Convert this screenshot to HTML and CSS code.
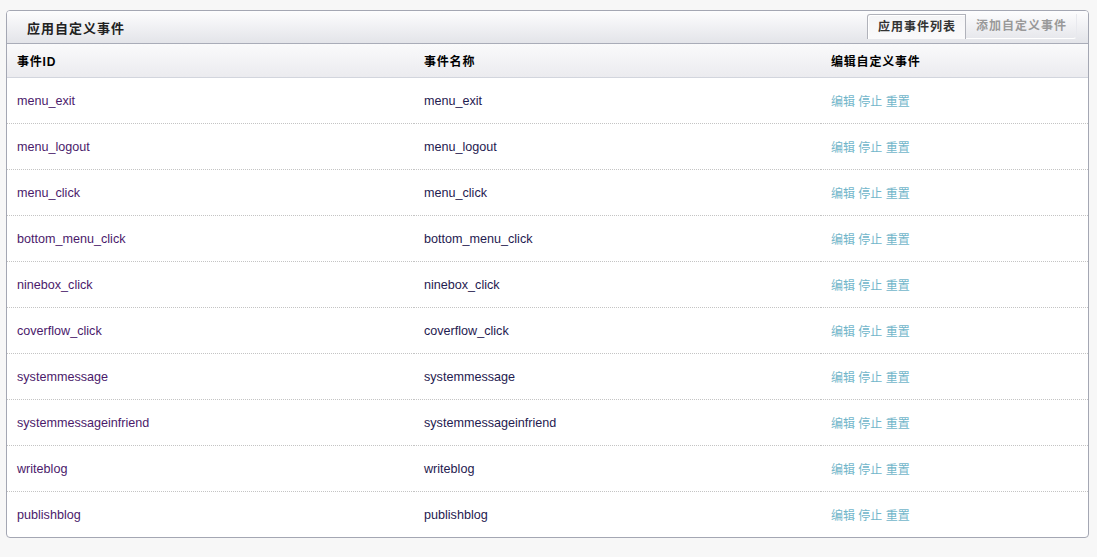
FILE: index.html
```html
<!DOCTYPE html>
<html lang="zh-CN">
<head>
    <meta charset="UTF-8">
    <title>应用自定义事件</title>
    <link rel="stylesheet" href="styles.css">
</head>
<body>

    <div class="panel">
        <div class="panel-head">
            <h2>应用自定义事件</h2>
            <div class="tabs">
                <a class="tab active" href="#">应用事件列表</a>
                <a class="tab" href="#">添加自定义事件</a>
            </div>
        </div>

        <table class="events">
            <thead>
                <tr>
                    <th class="col-id">事件ID</th>
                    <th class="col-name">事件名称</th>
                    <th>编辑自定义事件</th>
                </tr>
            </thead>
            <tbody>
                <tr><td class="ev-id">menu_exit</td><td class="ev-name">menu_exit</td><td class="ops"><a href="#">编辑</a> <a href="#">停止</a> <a href="#">重置</a></td></tr>
                <tr><td class="ev-id">menu_logout</td><td class="ev-name">menu_logout</td><td class="ops"><a href="#">编辑</a> <a href="#">停止</a> <a href="#">重置</a></td></tr>
                <tr><td class="ev-id">menu_click</td><td class="ev-name">menu_click</td><td class="ops"><a href="#">编辑</a> <a href="#">停止</a> <a href="#">重置</a></td></tr>
                <tr><td class="ev-id">bottom_menu_click</td><td class="ev-name">bottom_menu_click</td><td class="ops"><a href="#">编辑</a> <a href="#">停止</a> <a href="#">重置</a></td></tr>
                <tr><td class="ev-id">ninebox_click</td><td class="ev-name">ninebox_click</td><td class="ops"><a href="#">编辑</a> <a href="#">停止</a> <a href="#">重置</a></td></tr>
                <tr><td class="ev-id">coverflow_click</td><td class="ev-name">coverflow_click</td><td class="ops"><a href="#">编辑</a> <a href="#">停止</a> <a href="#">重置</a></td></tr>
                <tr><td class="ev-id">systemmessage</td><td class="ev-name">systemmessage</td><td class="ops"><a href="#">编辑</a> <a href="#">停止</a> <a href="#">重置</a></td></tr>
                <tr><td class="ev-id">systemmessageinfriend</td><td class="ev-name">systemmessageinfriend</td><td class="ops"><a href="#">编辑</a> <a href="#">停止</a> <a href="#">重置</a></td></tr>
                <tr><td class="ev-id">writeblog</td><td class="ev-name">writeblog</td><td class="ops"><a href="#">编辑</a> <a href="#">停止</a> <a href="#">重置</a></td></tr>
                <tr><td class="ev-id">publishblog</td><td class="ev-name">publishblog</td><td class="ops"><a href="#">编辑</a> <a href="#">停止</a> <a href="#">重置</a></td></tr>
            </tbody>
        </table>
    </div>

</body>
</html>
```

FILE: styles.css
```css
body {
    font-family: "Liberation Sans", Arial, "Noto Sans CJK SC", sans-serif;
    font-size: 12px;
    background-color: #f7f7f7;
    margin: 0;
    padding: 10px 0 0 6px;
}

.panel {
    width: 1081px;
    background: #fff;
    border: 1px solid #a4a7b3;
    border-radius: 4px;
    overflow: hidden;
}

.panel-head {
    height: 32px;
    display: flex;
    align-items: center;
    justify-content: space-between;
    padding: 0 11px 0 20px;
    background: linear-gradient(#fdfdfe, #e3e4e9);
    border-bottom: 1px solid #a9acb8;
}

.panel-head h2 {
    margin: 0;
    font-size: 13px;
    letter-spacing: 1px;
    font-weight: bold;
    color: #222;
}

.tabs {
    display: flex;
    align-self: flex-end;
    margin-bottom: 4px;
}

.tab {
    display: block;
    height: 24px;
    line-height: 24px;
    padding: 0 9px 0 10px;
    font-size: 12px;
    letter-spacing: 1px;
    font-weight: bold;
    color: #999;
    text-decoration: none;
    border-right: 1px solid #e8e9ee;
    border-bottom: 1px solid #fff;
    border-bottom-right-radius: 4px;
}

.tab.active {
    color: #333;
    background: linear-gradient(#f4f4f6, #fafafb);
    border: 1px solid #b0b2ba;
    border-bottom: none;
    border-radius: 3px 0 0 0;
    box-shadow: inset 1px 1px 0 #fff;
}

.events {
    width: 100%;
    border-collapse: collapse;
}

.events th {
    height: 33px;
    padding: 0 10px;
    text-align: left;
    font-weight: bold;
    letter-spacing: 0.8px;
    color: #000;
    background: linear-gradient(#fafafb, #ebebef);
    border-bottom: 1px solid #d2d5dd;
}

.col-id,
.col-name {
    width: 387px;
}

.events td {
    height: 45px;
    padding: 0 10px;
    font-size: 12.6px;
    border-bottom: 1px dotted #c4c4c4;
}

.events tbody tr:last-child td {
    border-bottom: none;
}

.ev-id {
    color: #4b1a6b;
}

.ev-name {
    color: #1f2050;
}

.events td.ops {
    font-size: 12px;
}

.ops a {
    color: #72b6ca;
    text-decoration: none;
}
```
